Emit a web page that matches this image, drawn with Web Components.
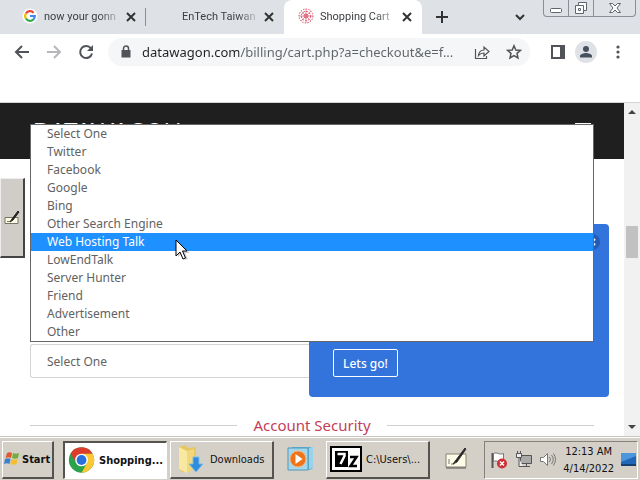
<!DOCTYPE html>
<html lang="en">
<head>
<meta charset="utf-8">
<title>Shopping Cart</title>
<style>
  html, body {
    margin: 0;
    height: 100%;
  }
  body {
    display: flex;
    flex-direction: column;
    overflow: hidden;
    background: #fff;
    font-family: "Noto Sans", "Open Sans", sans-serif;
    font-size: 12px;
    color: #5f5f5f;
  }
</style>
</head>
<body>
<tab-strip>
  <browser-tab label="now your gonn">
    <svg slot="icon" width="16" height="16" viewBox="0 0 16 16"><circle cx="8" cy="8" r="7.5" fill="#fff"/><g fill="none" stroke-width="2.2"><path d="M4 5.4A4.8 4.8 0 0 1 11.6 4.7" stroke="#ea4335"/><path d="M4 5.3a4.8 4.8 0 0 0 0 5.4" stroke="#fbbc05"/><path d="M4 10.6a4.8 4.8 0 0 0 7.4.9" stroke="#34a853"/><path d="M8 8h4.8a4.8 4.8 0 0 1-1.5 3.6" stroke="#4285f4"/></g></svg>
  </browser-tab>
  <browser-tab label="EnTech Taiwan"></browser-tab>
  <browser-tab label="Shopping Cart" active>
    <svg slot="icon" width="16" height="16" viewBox="0 0 16 16" fill="none" stroke="#d9536a"><circle cx="8" cy="8" r="7" stroke-dasharray="1.5 1.2"/><circle cx="8" cy="8" r="4.6" stroke-dasharray="2 1"/><circle cx="8" cy="8" r="2" /><path d="M8 1v14M1 8h14M3 3l10 10M13 3 3 13" stroke-width=".6"/></svg>
  </browser-tab>
</tab-strip>
<browser-toolbar url="datawagon.com/billing/cart.php?a=checkout&amp;e=f..."></browser-toolbar>
<page-view>
  <site-header>DATAWAGON</site-header>
  <checkout-form></checkout-form>
</page-view>
<task-bar>
  <task-button class="active" label="Shopping...">
    <svg width="32" height="32" viewBox="0 0 32 32"><g transform="translate(16 16)"><circle r="15" fill="#2ba24c"/><path d="M0 0-13-7.500A15 15 0 0 1 13-7.500L0-7z" fill="#dd3b2c"/><path d="M-13-7.500-6.100 3.500 0 0V-7.500z" fill="#dd3b2c"/><path d="M0-7.500H13A15 15 0 0 1 0 15L6.500 3.500z" fill="#fcc934"/><circle r="7.500" fill="#fff"/><circle r="5.800" fill="#2a70dd"/></g></svg>
  </task-button>
  <task-button label="Downloads">
    <svg width="32" height="32" viewBox="0 0 32 32"><path d="M5 4l7-2 2 3 8-1v22l-14 3-3-3z" fill="#e6c762"/><path d="M5 4l8 4v22l-8-4z" fill="#f9e8a0"/><path d="M13 8l7-2v20l-7 4z" fill="#f2d77c"/><path d="M19 14h6v7h4l-7 8-7-8h4z" fill="#2f8ddb" stroke="#76bdf0"/></svg>
  </task-button>
  <task-button class="quick" name="Media Player">
    <svg width="32" height="32" viewBox="0 0 32 32"><path d="M8 4h21v21l-3 2H8z" fill="#5eb2d6"/><path d="M26 5v21M28 4v21" stroke="#d9f2fc"/><path d="M4 5h20v22H4z" fill="#a5d7ec" stroke="#5097b7"/><circle cx="14" cy="16" r="8" fill="#ee7419" stroke="#f8b47b"/><path d="M11.500 11v10l7-5z" fill="#fff"/></svg>
  </task-button>
  <task-button label="C:\Users\...">
    <svg width="32" height="26" viewBox="0 0 32 26"><path d="M1 1h30v24H1z" fill="#fff" stroke="#000" stroke-width="2"/><path d="M5 5h13v16H5z"/><path d="M7.500 8h7v2l-4 8" fill="none" stroke="#fff" stroke-width="2.500"/><path d="M20 11h6.500L20.500 20H27" fill="none" stroke="#000" stroke-width="2.500"/></svg>
  </task-button>
  <task-button class="quick" name="Input Panel">
    <svg width="24" height="24" viewBox="0 0 24 24"><path d="M2 7h20v13H2z" fill="#fcfbe8" stroke="#85836e"/><path d="M2 21h20" stroke="#555"/><path d="M5 12v5M7 17h3" stroke="#777"/><path d="m21 1-9 12-3 4 4-2 9-13z" fill="#222" stroke="#333"/></svg>
  </task-button>
</task-bar>

<script>
(function () {
  // Attach an open shadow root and fill it with the given markup
  function render(el, html) {
    const template = document.createElement("template");
    template.innerHTML = html;
    el.attachShadow({ mode: "open" }).appendChild(template.content.cloneNode(true));
  }

  const reset = `
    :host, * { box-sizing: border-box; }
    button { margin: 0; padding: 0; border: 0; background: none; font: inherit; color: inherit; }
    svg { display: block; flex: none; }
  `;

  class TabStrip extends HTMLElement {
    constructor() {
      super();
      render(this, `
        <style>
          ${reset}
          :host { display: flex; flex: none; height: 34px; padding-left: 8px; background: #dee1e6; color: #3c4043; }
          .add { width: 40px; }
          .add svg, .more svg { margin: 0 auto; }
          .more { width: 32px; margin-left: auto; }
          .window { display: flex; height: 17px; margin: 0 4px 0 7px; border: 1px solid #8b8e94; border-top: 0; border-radius: 0 0 4px 4px; }
          .window button { width: 25px; border-right: 1px solid #8b8e94; }
          .window button:last-child { width: 41px; border: 0; }
          .window svg { margin: 0 auto; }
        </style>
        <slot></slot>
        <button class="add" aria-label="New tab"><svg width="12" height="12" viewBox="0 0 12 12"><path d="M6 0v12M0 6h12" stroke="#333" stroke-width="2"/></svg></button>
        <button class="more" aria-label="Search tabs"><svg width="12" height="12" viewBox="0 0 12 12" fill="none" stroke="#333" stroke-width="2"><path d="m2 4 4 4 4-4"/></svg></button>
        <div class="window">
          <button aria-label="Minimize"><svg width="14" height="14" viewBox="0 0 14 14" fill="#fff" stroke="#60646c"><rect x="1.500" y="7.500" width="11" height="4" rx="1"/></svg></button>
          <button aria-label="Restore"><svg width="14" height="14" viewBox="0 0 14 14" fill="#fff" stroke="#60646c"><path d="M4.500 1.500h8v8h-8z"/><path d="M1.500 4.500h8v8h-8zM4.500 7.500h2v2h-2z"/></svg></button>
          <button aria-label="Close"><svg width="14" height="14" viewBox="0 0 14 14" fill="#fff" stroke="#60646c"><path d="M1.500 2.500h3L7 5l2.500-2.500h3L9 7l3.500 4.500h-3L7 9l-2.500 2.500h-3L5 7z"/></svg></button>
        </div>
      `);
    }
  }
  customElements.define("tab-strip", TabStrip);

  class BrowserTab extends HTMLElement {
    constructor() {
      super();
      render(this, `
        <style>
          ${reset}
          :host { display: flex; align-items: center; flex: 0 1 138px; min-width: 0; padding: 0 10px 0 14px; font-family: Roboto, sans-serif; font-size: 11px; }
          :host(:first-of-type) { background: linear-gradient(#8a8d92, #8a8d92) no-repeat right center / 1px 18px; }
          :host([active]) { background: #fff; border-radius: 8px 8px 0 0; }
          .icon { flex: none; width: 16px; margin-right: 6px; }
          .label { flex: 1; overflow: hidden; white-space: nowrap; line-height: 16px; -webkit-mask-image: linear-gradient(90deg, #000 75%, #0003); mask-image: linear-gradient(90deg, #000 75%, #0003); }
          button { margin-left: 8px; }
        </style>
        <span class="icon"><slot name="icon"></slot></span>
        <span class="label">${this.getAttribute("label")}</span>
        <button aria-label="Close tab"><svg width="10" height="10" viewBox="0 0 10 10"><path d="m1 1 8 8M9 1 1 9" stroke="#333" stroke-width="2"/></svg></button>
      `);
    }
  }
  customElements.define("browser-tab", BrowserTab);

  class BrowserToolbar extends HTMLElement {
    constructor() {
      super();
      render(this, `
        <style>
          ${reset}
          :host { display: flex; align-items: center; flex: none; height: 36px; padding: 0 6px; background: #fff; color: #5f6368; }
          button { display: flex; justify-content: center; flex: none; width: 32px; }
          .panel { width: 24px; }
          .omnibox { display: flex; align-items: center; flex: 1; min-width: 0; height: 28px; margin: 0 16px 0 6px; padding-left: 12px; border-radius: 14px; background: #f5f6f7; }
          input {
            flex: 1; min-width: 0; height: 24px; margin-left: 10px; padding: 0; border: 0; outline: 0; font: inherit; font-size: 13px; color: #5f6368;
            /* host part darker than the path */
            background: linear-gradient(90deg, #202124 97px, #5f6368 97px);
            -webkit-background-clip: text; background-clip: text; -webkit-text-fill-color: transparent;
          }
        </style>
        <button aria-label="Back"><svg width="16" height="16" viewBox="0 0 16 16" fill="none" stroke="#505357" stroke-width="2"><path d="M15 8H2M8 2 2 8l6 6"/></svg></button>
        <button aria-label="Forward"><svg width="16" height="16" viewBox="0 0 16 16" fill="none" stroke="#b5b7ba" stroke-width="2"><path d="M1 8h13M8 2l6 6-6 6"/></svg></button>
        <button aria-label="Reload"><svg width="16" height="16" viewBox="0 0 16 16"><path d="M13 4.500A6 6 0 1 0 14 9.500" fill="none" stroke="#505357" stroke-width="2"/><path d="M15 1v6H9z" fill="#505357"/></svg></button>
        <div class="omnibox">
          <svg width="12" height="14" viewBox="0 0 12 14"><path d="M1.500 5h9v7.500h-9z" fill="#505357"/><path d="M3.500 6V3.500a2.500 2.500 0 0 1 5 0V6" fill="none" stroke="#505357" stroke-width="1.500"/></svg>
          <input type="text" aria-label="Address" value="${this.getAttribute("url")}">
          <button aria-label="Share"><svg width="16" height="16" viewBox="0 0 16 16" fill="none" stroke="#505357" stroke-width="1.200"><path d="M1.500 5v9.500h11V12"/><path d="M4.500 11.500c.5-4 2.500-5.500 5.500-5.500V3l5 4.500-5 4.500V9c-2.500 0-4 .5-5.500 2.500z"/></svg></button>
          <button aria-label="Bookmark this tab"><svg width="16" height="16" viewBox="0 0 16 16" fill="none" stroke="#505357" stroke-width="1.500"><path d="m8 1.800 1.800 4.200 4.700.4-3.500 3 1 4.600-4-2.400L4 14l1-4.600-3.500-3L6.200 6z"/></svg></button>
        </div>
        <button class="panel" aria-label="Side panel"><svg width="16" height="16" viewBox="0 0 16 16"><path d="M2 2h12v12H2z" fill="none" stroke="#505357" stroke-width="2"/><path d="M10 2h4v12h-4z" fill="#505357"/></svg></button>
        <button aria-label="Profile"><svg width="22" height="22" viewBox="0 0 22 22"><circle cx="11" cy="11" r="11" fill="#dee1e6"/><circle cx="11" cy="8" r="3" fill="#45505f"/><path d="M5 16.500v-1.500c0-2 4-3 6-3s6 1 6 3v1.500z" fill="#45505f"/></svg></button>
        <button aria-label="Menu"><svg width="4" height="16" viewBox="0 0 4 16" fill="#505357"><circle cx="2" cy="3" r="1.600"/><circle cx="2" cy="8" r="1.600"/><circle cx="2" cy="13" r="1.600"/></svg></button>
      `);
    }
  }
  customElements.define("browser-toolbar", BrowserToolbar);

  class PageView extends HTMLElement {
    constructor() {
      super();
      render(this, `
        <style>
          ${reset}
          :host { display: flex; flex-direction: column; flex: 1; min-height: 0; position: relative; }
          .bookmarks { flex: none; height: 33px; border-bottom: 1px solid #d5d5d5; }
          .view { display: flex; flex: 1; min-height: 0; }
          .content { flex: 1; min-width: 0; overflow: hidden; }
          .scroll { display: flex; flex-direction: column; width: 16px; padding: 0 2px; background: #f1f1f1; }
          .scroll svg { margin: 5px 2px; }
          .before { flex: 105; }
          .thumb { height: 32px; background: #c1c1c1; }
          .after { flex: 161; }
          .pen { position: absolute; left: 0; top: 108px; display: flex; align-items: center; width: 25px; height: 80px; padding-left: 3px; border: 1px solid #eee; border-right: 2px solid #444; border-bottom: 2px solid #444; background: #d0cdc8; }
        </style>
        <div class="bookmarks"></div>
        <div class="view">
          <div class="content"><slot></slot></div>
          <div class="scroll">
            <svg width="8" height="8" viewBox="0 0 8 8"><path d="M0 6h8L4 2z" fill="#444"/></svg>
            <div class="before"></div>
            <div class="thumb"></div>
            <div class="after"></div>
            <svg width="8" height="8" viewBox="0 0 8 8"><path d="M0 2h8L4 6z" fill="#444"/></svg>
          </div>
        </div>
        <button class="pen" aria-label="Tablet input panel"><svg width="16" height="16" viewBox="0 0 16 16"><path d="M1 7.500h13v6H1z" fill="#fcfbe0" stroke="#77756a"/><path d="M3 11.500h3" stroke="#777"/><path d="m14 1-6 8-2 3 3-2 6-8z" fill="#222" stroke="#222"/></svg></button>
      `);
    }
  }
  customElements.define("page-view", PageView);

  class SiteHeader extends HTMLElement {
    constructor() {
      super();
      render(this, `
        <style>
          ${reset}
          :host { display: flex; align-items: center; justify-content: space-between; height: 56px; padding: 0 33px; background: #1f1f1f; color: #fff; }
          .logo { font-family: Lato, sans-serif; font-size: 23px; line-height: 24px; color: inherit; text-decoration: none; }
        </style>
        <a class="logo" href="#"><slot></slot></a>
        <button aria-label="Toggle navigation"><svg width="16" height="16" viewBox="0 0 16 16" stroke="#fff" stroke-width="2"><path d="M0 1h16M0 8h16M0 15h16"/></svg></button>
      `);
    }
  }
  customElements.define("site-header", SiteHeader);

  class CheckoutForm extends HTMLElement {
    constructor() {
      super();
      const sources = ["Select One", "Twitter", "Facebook", "Google", "Bing", "Other Search Engine", "Web Hosting Talk", "LowEndTalk", "Server Hunter", "Friend", "Advertisement", "Other"];
      const options = sources.map(s => `<option${s === "Web Hosting Talk" ? " selected" : ""}>${s}</option>`).join("");
      render(this, `
        <style>
          ${reset}
          :host { display: block; position: relative; padding-top: 65px; }
          select { appearance: none; font: inherit; color: #626262; outline: 0; }
          .row { display: flex; align-items: flex-end; padding: 0 15px 0 30px; }
          .field { flex: 1; min-width: 0; height: 34px; margin-bottom: 19px; padding: 0 16px; border: 1px solid #d5d5d5; border-right: 0; border-radius: 3px 0 0 3px; background: #fff; }
          .promo { display: flex; flex-direction: column; justify-content: space-between; align-items: flex-start; flex: 0 0 300px; min-height: 173px; padding: 10px 9px 20px 24px; border-radius: 4px; background: #3273dc; color: #fff; }
          .close { align-self: flex-end; }
          .go { padding: 5px 9px 3px; border: 1px solid #fff; border-radius: 2px; font-weight: 500; line-height: 18px; }
          .list { position: absolute; top: -35px; left: 30px; right: 30px; height: 218px; padding: 0; border: 1px solid #666; border-radius: 0; background: #fff; overflow: hidden; }
          .list option { height: 18px; min-height: 18px; padding: 0 16px; line-height: 18px; }
          .list option:checked { background: #1e90ff linear-gradient(#1e90ff, #1e90ff); color: #fff; }
          h2 { display: flex; align-items: center; gap: 16px; margin: 16px 30px 0; font-size: 15px; font-weight: 400; line-height: 24px; color: #c4405a; }
          h2::before, h2::after { content: ""; flex: 1; height: 1px; background: #d0d0d0; }
          .cursor { position: absolute; left: 175px; top: 80px; }
        </style>
        <div class="row">
          <select class="field" aria-label="How did you find us?"><option>Select One</option></select>
          <div class="promo">
            <button class="close" aria-label="Close"><svg width="16" height="16" viewBox="0 0 16 16"><circle cx="8" cy="8" r="8" fill="#245bb5"/><path d="m5 5 6 6M11 5l-6 6" stroke="#fff" stroke-width="2"/></svg></button>
            <button class="go">Lets go!</button>
          </div>
        </div>
        <h2>Account Security</h2>
        <select class="list" size="12" aria-label="Referral source">${options}</select>
        <svg class="cursor" width="16" height="22" viewBox="0 0 16 22"><path d="M3 3v15l4-3 3 6 3-1-3-6h5z" fill="#0003"/><path d="M1 1v16l4-4 3 7 2.500-1L7.500 12H12z" fill="#fff" stroke="#000"/></svg>
      `);
    }
  }
  customElements.define("checkout-form", CheckoutForm);

  class TaskButton extends HTMLElement {
    constructor() {
      super();
      const label = this.getAttribute("label");
      render(this, `
        <style>
          ${reset}
          :host { display: block; flex: 0 1 104px; min-width: 0; }
          button { display: flex; align-items: center; gap: 4px; width: 100%; height: 38px; padding: 0 3px; border: 1px solid; border-width: 1px 2px 2px 1px; border-color: #fff #55534f #55534f #fff; white-space: nowrap; overflow: hidden; }
          :host(.active) button { border-width: 2px 1px 1px 2px; border-color: #55534f #fff #fff #55534f; background: #fff; font-weight: bold; }
          :host(.quick) { flex-basis: 46px; }
          :host(.quick) button { justify-content: center; border-color: transparent; }
        </style>
        <button aria-label="${label || this.getAttribute("name")}"><slot></slot>${label ? `<span>${label}</span>` : ""}</button>
      `);
    }
  }
  customElements.define("task-button", TaskButton);

  class TaskBar extends HTMLElement {
    constructor() {
      super();
      render(this, `
        <style>
          ${reset}
          :host { display: flex; align-items: center; flex: none; gap: 3px; height: 44px; padding: 2px 2px 0; border-top: 1px solid #c8c4bc; background: #d4d0c8; box-shadow: inset 0 1px #fff; color: #111; font-family: "DejaVu Sans Condensed", "DejaVu Sans", sans-serif; font-size: 11px; }
          .start { display: flex; align-items: center; flex: none; gap: 2px; width: 52px; height: 38px; margin-right: 6px; padding-left: 1px; border: 1px solid; border-width: 1px 2px 2px 1px; border-color: #fff #55534f #55534f #fff; font-weight: bold; }
          .tray { display: flex; align-items: center; gap: 7px; flex: none; height: 38px; margin-left: auto; padding: 0 1px 0 5px; border: 1px solid; border-color: #85827c #fff #fff #85827c; }
          .clock { line-height: 17px; text-align: center; }
        </style>
        <button class="start"><svg width="16" height="16" viewBox="0 0 16 16"><path d="M3 2c2-1 3-1 5 0L7 7C5 6 4 6 1.500 7z" fill="#e2572b"/><path d="M9 2c2 1 4 1 6 0l-1 5c-2 1-4 1-6 0z" fill="#72ad3d"/><path d="M1 8c2-1 4-1 5.500 0l-1 5C4 12 2 12 0 13z" fill="#3d80c9"/><path d="M7.500 8c2 1 4 1 6 0l-1 5c-2 1-4 1-6 0z" fill="#f6bd2c"/></svg><span>Start</span></button>
        <slot></slot>
        <div class="tray">
          <svg width="18" height="18" viewBox="0 0 18 18"><path d="M2.500 2v15" stroke="#555" stroke-width="2"/><path d="M3.500 2.500c4-2 5 2 10 0v8c-5 2-6-2-10 0z" fill="#fff" stroke="#777"/><circle cx="12" cy="12.500" r="5" fill="#cf2f35"/><path d="m10 10.500 4 4M14 10.500l-4 4" stroke="#fff" stroke-width="1.500"/></svg>
          <svg width="17" height="17" viewBox="0 0 17 17" fill="#eee" stroke="#555"><path d="M5.500 4.500h11v8h-11z" fill="#aaa"/><path d="M8 15.500h7M11.500 13v2"/><path d="M1.500 2.500h5v4h-5zM2.500 0v3M5.500 0v3M4 7v8.500h4"/></svg>
          <svg width="17" height="17" viewBox="0 0 17 17" fill="none" stroke="#777"><path d="M1.500 6.500h3l4-4v12l-4-4h-3z" fill="#fff"/><path d="M10.500 6q2 2.500 0 5M12.500 4q3.500 4.500 0 9M14.500 2.500q4 6 0 12"/></svg>
          <div class="clock">12:13 AM<br>4/14/2022</div>
          <svg width="15" height="13" viewBox="0 0 15 13"><path d="M0 0h15v12H0z" fill="#2167b8"/><path d="M0 0h15v3L0 9z" fill="#4c96dc"/><path d="M0 12h15" stroke="#163f73" stroke-width="2"/></svg>
        </div>
      `);
    }
  }
  customElements.define("task-bar", TaskBar);
})();
</script>
</body>
</html>
